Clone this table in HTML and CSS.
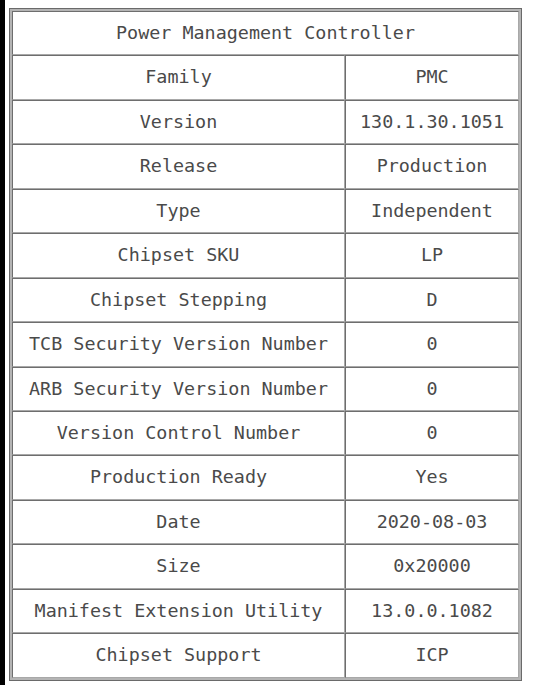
FILE: index.html
```html
<!DOCTYPE html>
<html>
<head>
<meta charset="utf-8">
<link rel="stylesheet" href="styles.css">
</head>
<body>
<div class="frame">
<table class="info">
<tr><td colspan="2">Power Management Controller</td></tr>
<tr><td class="key">Family</td><td class="val">PMC</td></tr>
<tr><td class="key">Version</td><td class="val">130.1.30.1051</td></tr>
<tr><td class="key">Release</td><td class="val">Production</td></tr>
<tr><td class="key">Type</td><td class="val">Independent</td></tr>
<tr><td class="key">Chipset SKU</td><td class="val">LP</td></tr>
<tr><td class="key">Chipset Stepping</td><td class="val">D</td></tr>
<tr><td class="key">TCB Security Version Number</td><td class="val">0</td></tr>
<tr><td class="key">ARB Security Version Number</td><td class="val">0</td></tr>
<tr><td class="key">Version Control Number</td><td class="val">0</td></tr>
<tr><td class="key">Production Ready</td><td class="val">Yes</td></tr>
<tr><td class="key">Date</td><td class="val">2020-08-03</td></tr>
<tr><td class="key">Size</td><td class="val">0x20000</td></tr>
<tr><td class="key">Manifest Extension Utility</td><td class="val">13.0.0.1082</td></tr>
<tr><td class="key">Chipset Support</td><td class="val">ICP</td></tr>
</table>
</div>
</body>
</html>
```
FILE: styles.css
```css
html { background: #fff; }
body {
  margin: 0;
  min-height: 685px;
  box-sizing: border-box;
  border-left: 5px solid #000;
  padding: 8px 0 0 4px;
  background: #fff;
}
.frame {
  display: inline-block;
  border: 1px solid #6a6a6a;
}
.info {
  border: 2px solid #b4b4b4;
  border-collapse: separate;
  border-spacing: 0;
  font-family: "DejaVu Sans Mono", monospace;
  font-size: 18.4px;
  color: #4a4a4a;
}
.info td {
  border: 1px solid #6e6e6e;
  border-bottom-color: #a8a8a8;
  border-right-color: #a8a8a8;
  text-align: center;
  padding: 0;
  line-height: 42.43px;
  height: 42.43px;
  white-space: nowrap;
}
.info td.key { width: 331px; }
.info td.val { width: 172px; }
```
